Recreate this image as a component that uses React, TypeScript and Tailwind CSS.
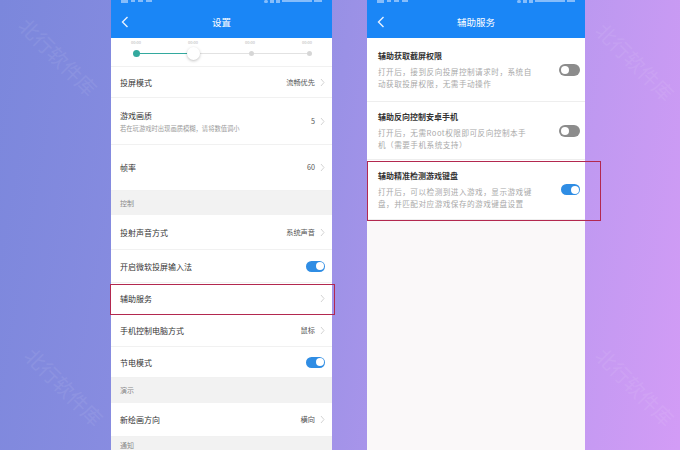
import React from "react";

const FONT = { fontFamily: '"Noto Sans CJK SC", "Noto Sans", sans-serif' };

function Chevron() {
  return (
    <svg width="5" height="9" viewBox="0 0 5 9" className="ml-[5px] shrink-0">
      <path d="M1 1 L4 4.5 L1 8" fill="none" stroke="#d4d4d4" strokeWidth="1" />
    </svg>
  );
}

function Toggle({ on }: { on: boolean }) {
  return on ? (
    <div className="w-[19px] h-[11px] rounded-full bg-[#2f8de4] flex items-center justify-end pr-[1.5px]">
      <div className="w-[8px] h-[8px] rounded-full bg-white" />
    </div>
  ) : (
    <div className="w-[21px] h-[12px] rounded-full bg-[#8c8c8c] flex items-center justify-start pl-[2px]">
      <div className="w-[8px] h-[8px] rounded-full bg-white" />
    </div>
  );
}

function Header({ title }: { title: string }) {
  return (
    <div className="relative h-[38px] bg-[#1a86f6] shrink-0">
      <div className="absolute top-0 left-[10px] right-[10px] h-[5px] flex justify-between items-start">
        <div className="flex gap-[3px] opacity-60">
          <div className="w-[7px] h-[3px] bg-[#cfe3ff]" />
          <div className="w-[4px] h-[2px] bg-[#cfe3ff]" />
          <div className="w-[5px] h-[2px] bg-[#cfe3ff]" />
          <div className="w-[6px] h-[2px] bg-[#cfe3ff]" />
        </div>
        <div className="flex gap-[2px] opacity-60">
          <div className="w-[4px] h-[3px] rounded-full bg-[#cfe3ff]" />
          <div className="w-[4px] h-[3px] bg-[#cfe3ff]" />
          <div className="w-[4px] h-[3px] bg-[#cfe3ff]" />
          <div className="w-[30px] h-[2px] bg-[#cfe3ff]" />
          <div className="w-[8px] h-[2px] bg-[#cfe3ff]" />
        </div>
      </div>
      <svg width="8" height="12" viewBox="0 0 8 12" className="absolute left-[10px] top-[16px]">
        <path d="M6.5 1 L1.5 6 L6.5 11" fill="none" stroke="#e6f1ff" strokeWidth="1.4" />
      </svg>
      <div className="absolute inset-x-0 top-[15px] text-center text-[9.5px] leading-[14px] text-white" style={FONT}>
        {title}
      </div>
    </div>
  );
}

function Row({ h, title, value, toggle, chevron = true, sub }: { h: number; title: string; value?: string; toggle?: boolean; chevron?: boolean; sub?: string }) {
  return (
    <div className="flex items-center pl-[9px] pr-[7px] bg-white border-b border-[#f1f1f1] shrink-0" style={{ height: h }}>
      <div className="flex-1 min-w-0">
        <div className="text-[8px] leading-[11px] text-[#333]">{title}</div>
        {sub && <div className="text-[6.3px] leading-[9px] mt-[3px] text-[#9a9a9a] whitespace-nowrap">{sub}</div>}
      </div>
      {value && <div className="text-[7.2px] text-[#555]">{value}</div>}
      {toggle !== undefined ? <Toggle on={toggle} /> : chevron ? <Chevron /> : null}
    </div>
  );
}

function Section({ h, title }: { h: number; title: string }) {
  return (
    <div className="flex items-center pl-[9px] bg-[#f2f2f2] shrink-0" style={{ height: h }}>
      <div className="text-[7px] text-[#8a8a8a]">{title}</div>
    </div>
  );
}

function LeftPhone() {
  return (
    <div className="relative w-[221px] h-[450px] bg-white flex flex-col overflow-hidden" style={FONT}>
      <Header title="设置" />
      <div className="h-[29px] shrink-0 relative border-b border-[#f1f1f1]">
        <div className="flex justify-between px-[20px] pt-[1px] text-[4px] text-[#b5b5b5] leading-[6px]">
          <span>00:00</span>
          <span>00:00</span>
          <span>00:00</span>
          <span>00:00</span>
        </div>
        <div className="absolute left-[25px] right-[22px] top-[15px] h-[1px] bg-[#e2e2e2]" />
        <div className="absolute left-[25px] w-[57px] top-[15px] h-[1px] bg-[#33a99e]" />
        <div className="absolute left-[22px] top-[12px] w-[7px] h-[7px] rounded-full bg-[#33a99e]" />
        <div className="absolute left-[76px] top-[9px] w-[13px] h-[13px] rounded-full bg-white shadow-[0_1px_3px_rgba(0,0,0,0.25)]" />
        <div className="absolute left-[138px] top-[13px] w-[5px] h-[5px] rounded-full bg-[#d6d6d6]" />
        <div className="absolute left-[196px] top-[13px] w-[5px] h-[5px] rounded-full bg-[#d6d6d6]" />
      </div>
      <Row h={31} title="投屏模式" value="流畅优先" />
      <Row h={47} title="游戏画质" value="5" sub="若在玩游戏时出现画质模糊，请将数值调小" />
      <Row h={46} title="帧率" value="60" />
      <Section h={24} title="控制" />
      <Row h={35} title="投射声音方式" value="系统声音" />
      <Row h={33} title="开启微软投屏输入法" toggle={true} />
      <Row h={32} title="辅助服务" />
      <Row h={32} title="手机控制电脑方式" value="鼠标" />
      <Row h={31} title="节电模式" toggle={true} />
      <Section h={25} title="演示" />
      <Row h={34} title="新绘画方向" value="横向" />
      <div className="flex items-start pt-[4px] pl-[9px] bg-[#f2f2f2] shrink-0 h-[25px]">
        <div className="text-[7px] leading-[9px] text-[#8a8a8a]">通知</div>
      </div>
    </div>
  );
}

function Item({ h, title, lines, on }: { h: number; title: string; lines: string[]; on: boolean }) {
  return (
    <div className="flex items-center pl-[11px] pr-[5px] bg-white border-b border-[#eeeeee] shrink-0" style={{ height: h }}>
      <div className="flex-1">
        <div className="text-[8px] leading-[11px] font-bold text-[#333]">{title}</div>
        <div className="mt-[5px]">
          {lines.map((l) => (
            <div key={l} className="text-[7.6px] leading-[11.5px] tracking-[0.5px] text-[#a9a9a9] whitespace-nowrap">
              {l}
            </div>
          ))}
        </div>
      </div>
      <Toggle on={on} />
    </div>
  );
}

function RightPhone() {
  return (
    <div className="relative w-[218px] h-[450px] bg-[#faf8f9] flex flex-col overflow-hidden" style={FONT}>
      <Header title="辅助服务" />
      <Item h={64} title="辅助获取截屏权限" lines={["打开后，接到反向投屏控制请求时，系统自", "动获取投屏权限，无需手动操作"]} on={false} />
      <Item h={58} title="辅助反向控制安卓手机" lines={["打开后，无需Root权限即可反向控制本手", "机（需要手机系统支持）"]} on={false} />
      <Item h={60} title="辅助精准检测游戏键盘" lines={["打开后，可以检测到进入游戏，显示游戏键", "盘，并匹配对应游戏保存的游戏键盘设置"]} on={true} />
    </div>
  );
}

function Watermark({ x, y }: { x: number; y: number }) {
  return (
    <div
      className="absolute text-[20px] leading-[24px] text-white opacity-[0.07] rotate-[45deg] whitespace-nowrap pointer-events-none"
      style={{ left: x, top: y, ...FONT }}
    >
      北行软件库
    </div>
  );
}

export default function App() {
  return (
    <div className="relative w-[680px] h-[450px] overflow-hidden bg-[linear-gradient(100deg,#7b87dc_0%,#8d8ee2_35%,#b497ee_70%,#d39cf6_100%)]">
      <div className="flex h-full pl-[111px] gap-[35px]">
        <LeftPhone />
        <RightPhone />
      </div>
      <div className="absolute left-[110px] top-[284px] w-[225px] h-[31px] border-[1.5px] border-[#b3284f]" />
      <div className="absolute left-[367px] top-[161px] w-[234px] h-[60px] border-[1.5px] border-[#b3284f]" />
      <Watermark x={8} y={45} />
      <Watermark x={14} y={375} />
      <Watermark x={585} y={50} />
      <Watermark x={585} y={375} />
    </div>
  );
}
